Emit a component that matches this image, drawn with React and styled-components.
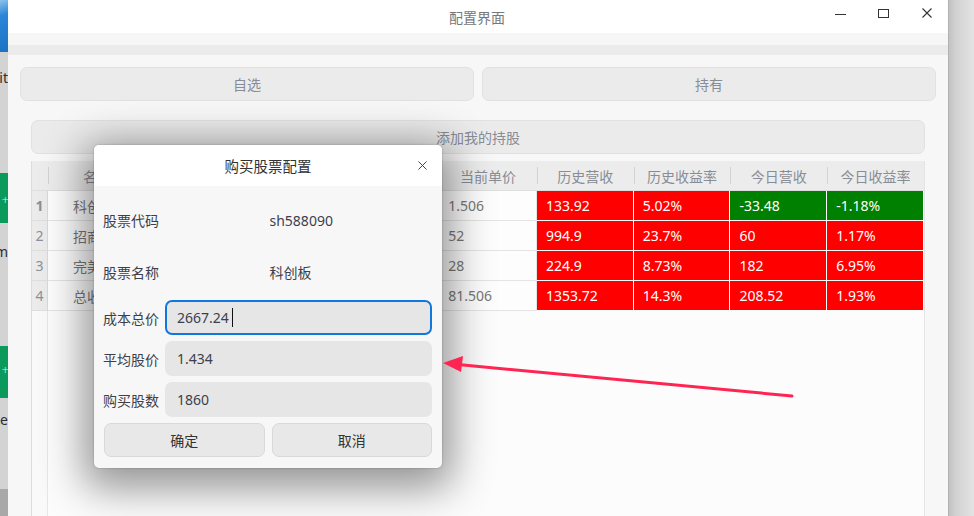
import React from "react";
import styled, { createGlobalStyle } from "styled-components";

const GlobalStyle = createGlobalStyle`
  html, body {
    margin: 0;
    padding: 0;
    height: 100%;
    overflow: hidden;
  }
  body {
    font-family: "Noto Sans", "Noto Sans CJK SC", sans-serif;
    font-size: 14px;
    background: #d4d4d4;
  }
  #root {
    height: 100%;
  }
`;

const Screen = styled.div`
  position: relative;
  display: flex;
  width: 974px;
  height: 516px;
  overflow: hidden;
`;

/* desktop peeking out on the left */
const Desktop = styled.div`
  width: 8px;
  flex: none;
  display: flex;
  flex-direction: column;
  background: #d3d3d3;
  overflow: hidden;
`;

const DeskTile = styled.div`
  height: ${(p) => p.$h}px;
  flex: ${(p) => (p.$grow ? 1 : "none")};
  background: ${(p) => p.$bg || "transparent"};
  display: flex;
  justify-content: flex-end;
  padding-top: ${(p) => p.$pt || 0}px;
  box-sizing: border-box;
  white-space: nowrap;
  color: #2d2d2d;
  font-size: 14px;
  line-height: 16px;
`;

const DeskPlus = styled.span`
  color: #cfeedd;
  font-size: 13px;
  line-height: 14px;
  font-weight: 300;
  margin-top: ${(p) => p.$mt}px;
  margin-right: -1px;
`;

/* main window */
const Window = styled.div`
  width: 940px;
  flex: none;
  display: flex;
  flex-direction: column;
  background: #f7f7f7;
`;

const TitleBar = styled.div`
  height: 33px;
  flex: none;
  background: #ffffff;
  display: grid;
  grid-template-columns: 1fr auto 1fr;
  align-items: center;
`;

const WindowTitle = styled.div`
  color: #777;
  font-size: 14px;
  padding-right: 2px;
`;

const Controls = styled.div`
  justify-self: end;
  display: flex;
  height: 100%;
`;

const ControlButton = styled.div`
  width: 43px;
  height: 100%;
  display: flex;
  align-items: center;
  justify-content: center;
  padding-bottom: 7px;
  box-sizing: border-box;
`;

const Strip = styled.div`
  height: ${(p) => p.$h}px;
  flex: none;
  background: ${(p) => p.$bg};
`;

const Content = styled.div`
  flex: 1;
  min-height: 0;
  display: flex;
  flex-direction: column;
  padding: 12px 12px 0;
`;

const TabRow = styled.div`
  display: grid;
  grid-template-columns: 1fr 1fr;
  gap: 8px;
  height: 34px;
  flex: none;
`;

const SoftButton = styled.div`
  height: 34px;
  box-sizing: border-box;
  display: flex;
  align-items: center;
  justify-content: center;
  background: #ebebeb;
  border: 1px solid #e1e1e1;
  border-radius: 7px;
  color: #878c96;
  font-size: 14px;
`;

const Panel = styled.div`
  flex: 1;
  min-height: 0;
  display: flex;
  flex-direction: column;
  padding: 19px 11px 0;
  gap: 7px;
`;

/* table */
const Table = styled.div`
  flex: 1;
  display: flex;
  flex-direction: column;
  background: #fcfcfc;
  border-left: 1px solid #dcdcdc;
  border-right: 1px solid #e4e4e4;
`;

const Row = styled.div`
  display: grid;
  grid-template-columns: 16px repeat(5, 97.8px) repeat(4, 1fr);
  height: 30px;
  flex: none;
`;

const HeadCell = styled.div`
  position: relative;
  display: flex;
  align-items: center;
  justify-content: center;
  background: #ececec;
  border-bottom: 1px solid #dedede;
  color: #888c96;
  white-space: nowrap;
  &::before {
    content: "";
    display: ${(p) => (p.$first ? "none" : "block")};
    position: absolute;
    left: 0;
    top: 6px;
    bottom: 6px;
    width: 1px;
    background: #d2d2d2;
  }
`;

const tones = {
  plain: { bg: "#fdfdfd", fg: "#777", line: "#e4e4e4" },
  up: { bg: "#ff0000", fg: "#ffffff", line: "#ffffff" },
  down: { bg: "#008000", fg: "#ffffff", line: "#ffffff" },
};

const Cell = styled.div`
  display: flex;
  align-items: center;
  padding-left: ${(p) => p.$pad || 9}px;
  background: ${(p) => tones[p.$tone || "plain"].bg};
  color: ${(p) => tones[p.$tone || "plain"].fg};
  border-right: 1px solid ${(p) => tones[p.$tone || "plain"].line};
  border-bottom: 1px solid ${(p) => tones[p.$tone || "plain"].line};
  white-space: nowrap;
  overflow: hidden;
`;

const NumCell = styled.div`
  display: flex;
  align-items: center;
  justify-content: center;
  background: #ebebeb;
  color: #8a8f99;
  font-weight: ${(p) => (p.$active ? 700 : 400)};
  border-right: 1px solid #d8d8d8;
  border-bottom: 1px solid #dedede;
`;

const Filler = styled.div`
  flex: 1;
  display: grid;
  grid-template-columns: 16px 1fr;
`;

const FillerGutter = styled.div`
  background: #f9f9f9;
  border-right: 1px solid #e6e6e6;
`;

/* dialog */
const Dialog = styled.div`
  position: absolute;
  left: 94px;
  top: 145px;
  width: 348px;
  height: 323px;
  display: flex;
  flex-direction: column;
  background: #f7f7f7;
  border-radius: 5px;
  overflow: hidden;
  box-shadow: 0 10px 42px 10px rgba(0, 0, 0, 0.42), 0 0 2px rgba(0, 0, 0, 0.3);
`;

const DialogHead = styled.div`
  height: 41px;
  flex: none;
  background: #ffffff;
  display: grid;
  grid-template-columns: 40px 1fr 40px;
  align-items: center;
`;

const DialogTitle = styled.div`
  text-align: center;
  color: #333;
  font-size: 14.5px;
`;

const DialogClose = styled.div`
  display: flex;
  justify-content: center;
  align-items: center;
`;

const DialogBody = styled.div`
  flex: 1;
  display: flex;
  flex-direction: column;
  padding: 8px 10px 10px 9px;
`;

const InfoGrid = styled.div`
  display: grid;
  grid-template-columns: 1fr 1fr;
  column-gap: 4px;
  grid-auto-rows: 52px;
  align-items: center;
  margin-bottom: 2px;
`;

const Label = styled.div`
  color: #3d3f4d;
  font-size: 14px;
  white-space: nowrap;
`;

const FormGrid = styled.div`
  display: grid;
  grid-template-columns: auto 1fr;
  column-gap: 6px;
  row-gap: 6px;
  grid-auto-rows: 35px;
  align-items: center;
`;

const Field = styled.div`
  height: 35px;
  box-sizing: border-box;
  display: flex;
  align-items: center;
  padding-left: 10px;
  background: #e6e6e6;
  border: 2px solid ${(p) => (p.$focused ? "#1276df" : "transparent")};
  border-radius: 7px;
  color: #3d3f4d;
  font-size: 14px;
`;

const Caret = styled.span`
  display: inline-block;
  width: 1px;
  height: 19px;
  background: #111;
  margin-left: 3px;
`;

const ButtonRow = styled.div`
  display: grid;
  grid-template-columns: 1fr 1fr;
  gap: 7px;
  margin-top: 6px;
  padding-left: 1px;
`;

const DialogButton = styled.div`
  height: 34px;
  box-sizing: border-box;
  display: flex;
  align-items: center;
  justify-content: center;
  background: #e8e8e8;
  border: 1px solid #d9d9d9;
  border-radius: 7px;
  color: #333;
  font-size: 14px;
`;

const RightShade = styled.div`
  flex: 1;
  background: linear-gradient(
    to right,
    #a3a3a3 0,
    #c2c2c2 1px,
    #d2d2d2 8px,
    #e3e3e3 26px
  );
`;

const Annotation = styled.svg`
  position: absolute;
  left: 0;
  top: 0;
  pointer-events: none;
`;

const heads = ["名称", "代码", "持有数量", "成本单价", "当前单价", "历史营收", "历史收益率", "今日营收", "今日收益率"];

const rows = [
  ["科创板", "sh588090", "1860", "1.434", "1.506", ["133.92", "up"], ["5.02%", "up"], ["-33.48", "down"], ["-1.18%", "down"]],
  ["招商银行", "sh600036", "100", "42.05", "52", ["994.9", "up"], ["23.7%", "up"], ["60", "up"], ["1.17%", "up"]],
  ["完美世界", "sz002624", "100", "25.75", "28", ["224.9", "up"], ["8.73%", "up"], ["182", "up"], ["6.95%", "up"]],
  ["总收益", "", "", "", "81.506", ["1353.72", "up"], ["14.3%", "up"], ["208.52", "up"], ["1.93%", "up"]],
];

const XIcon = ({ size = 10, color = "#333" }) => (
  <svg width={size} height={size} viewBox="0 0 10 10">
    <path d="M0.5 0.5 L9.5 9.5 M9.5 0.5 L0.5 9.5" stroke={color} strokeWidth="1.1" fill="none" />
  </svg>
);

export default function App() {
  return (
    <>
      <GlobalStyle />
      <Screen>
        <Desktop>
          <DeskTile $h={52} $bg="linear-gradient(160deg, #8cc4ee 0, #2a86d6 30%, #1c72c4 100%)" />
          <DeskTile $h={121} $pt={18}>Edit</DeskTile>
          <DeskTile $h={50} $bg="#0c9a5c">
            <DeskPlus $mt={20}>+</DeskPlus>
          </DeskTile>
          <DeskTile $h={123} $pt={21}>.com</DeskTile>
          <DeskTile $h={52} $bg="#0c9a5c">
            <DeskPlus $mt={17}>+</DeskPlus>
          </DeskTile>
          <DeskTile $h={91} $pt={14}>code</DeskTile>
          <DeskTile $grow $bg="#a8a8a8" />
        </Desktop>

        <Window>
          <TitleBar>
            <span />
            <WindowTitle>配置界面</WindowTitle>
            <Controls>
              <ControlButton>
                <svg width="11" height="11" viewBox="0 0 11 11">
                  <path d="M0 6.5 H11" stroke="#333" strokeWidth="1" />
                </svg>
              </ControlButton>
              <ControlButton>
                <svg width="11" height="11" viewBox="0 0 11 11">
                  <rect x="0.5" y="1.5" width="10" height="8" stroke="#333" strokeWidth="1" fill="none" />
                </svg>
              </ControlButton>
              <ControlButton>
                <XIcon />
              </ControlButton>
            </Controls>
          </TitleBar>
          <Strip $h={12} $bg="#f6f6f6" />
          <Strip $h={10} $bg="#ebebeb" />

          <Content>
            <TabRow>
              <SoftButton>自选</SoftButton>
              <SoftButton>持有</SoftButton>
            </TabRow>
            <Panel>
              <SoftButton>添加我的持股</SoftButton>
              <Table>
                <Row>
                  <HeadCell $first />
                  {heads.map((h) => (
                    <HeadCell key={h}>{h}</HeadCell>
                  ))}
                </Row>
                {rows.map((r, i) => (
                  <Row key={i}>
                    <NumCell $active={i === 0}>{i + 1}</NumCell>
                    <Cell $pad={25}>{r[0]}</Cell>
                    <Cell>{r[1]}</Cell>
                    <Cell>{r[2]}</Cell>
                    <Cell>{r[3]}</Cell>
                    <Cell>{r[4]}</Cell>
                    {r.slice(5).map(([v, tone], j) => (
                      <Cell key={j} $tone={tone}>
                        {v}
                      </Cell>
                    ))}
                  </Row>
                ))}
                <Filler>
                  <FillerGutter />
                  <div />
                </Filler>
              </Table>
            </Panel>
          </Content>
        </Window>

        <RightShade />

        <Dialog>
          <DialogHead>
            <span />
            <DialogTitle>购买股票配置</DialogTitle>
            <DialogClose>
              <XIcon size={9} color="#444" />
            </DialogClose>
          </DialogHead>
          <DialogBody>
            <InfoGrid>
              <Label>股票代码</Label>
              <Label>sh588090</Label>
              <Label>股票名称</Label>
              <Label>科创板</Label>
            </InfoGrid>
            <FormGrid>
              <Label>成本总价</Label>
              <Field $focused>
                2667.24
                <Caret />
              </Field>
              <Label>平均股价</Label>
              <Field>1.434</Field>
              <Label>购买股数</Label>
              <Field>1860</Field>
            </FormGrid>
            <ButtonRow>
              <DialogButton>确定</DialogButton>
              <DialogButton>取消</DialogButton>
            </ButtonRow>
          </DialogBody>
        </Dialog>

        <Annotation width="974" height="516" viewBox="0 0 974 516">
          <line x1="792" y1="396" x2="458" y2="364.5" stroke="#ff2452" strokeWidth="3" strokeLinecap="round" />
          <polygon points="443,363 463,356 461,372" fill="#ff2452" />
        </Annotation>
      </Screen>
    </>
  );
}
